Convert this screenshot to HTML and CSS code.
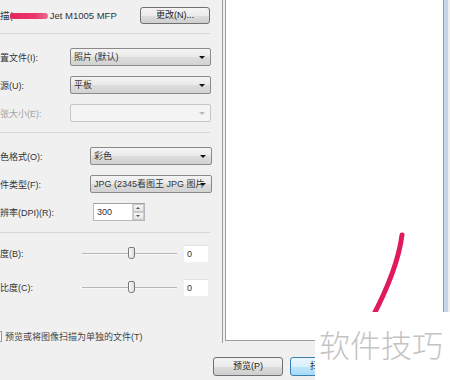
FILE: index.html
```html
<!DOCTYPE html>
<html>
<head>
    <title>新扫描</title>
    <meta content="text/html;charset=utf-8" http-equiv="Content-Type">
    <link rel="stylesheet" href="styles.css">
</head>
<body>
<div class="window">
    <div class="main">
        <div class="settings">
            <div class="scanner-row">
                <span class="scanner-name">描(<span class="redact"></span>Jet M1005 MFP</span>
                <a class="btn change-btn">更改(N)...</a>
            </div>
            <div class="sep"></div>
            <div class="group group-a">
                <span class="label">置文件(I):</span>
                <div class="select">照片 (默认)</div>
                <span class="label">源(U):</span>
                <div class="select">平板</div>
                <span class="label disabled">张大小(E):</span>
                <div class="select select-off"></div>
            </div>
            <div class="sep"></div>
            <div class="group group-b">
                <span class="label">色格式(O):</span>
                <div class="select">彩色</div>
                <span class="label">件类型(F):</span>
                <div class="select">JPG (2345看图王 JPG 图片</div>
                <span class="label">辨率(DPI)(R):</span>
                <div class="spin">
                    <span class="spin-value">300</span>
                    <span class="spin-buttons"><i class="up"></i><i class="down"></i></span>
                </div>
            </div>
            <div class="sep sep-last"></div>
            <div class="group group-c">
                <span class="label">度(B):</span>
                <div class="slider"><span class="thumb"></span></div>
                <div class="field">0</div>
                <span class="label">比度(C):</span>
                <div class="slider"><span class="thumb"></span></div>
                <div class="field">0</div>
            </div>
            <div class="check-row">
                <span class="checkbox"></span>
                <span class="check-label">预览或将图像扫描为单独的文件(T)</span>
            </div>
        </div>
        <div class="preview"></div>
        <div class="edge"></div>
    </div>
    <div class="buttons">
        <a class="btn">预览(P)</a>
        <a class="btn btn-default">扫描(S)</a>
    </div>
</div>

<svg class="stroke" width="450" height="380" viewBox="0 0 450 380">
    <path d="M402,235 C399,258 391,282 372,318" fill="none" stroke="#e01a5c" stroke-width="5" stroke-linecap="round"/>
</svg>
<div class="watermark">软件技巧</div>
</body>
</html>
```

FILE: styles.css
```css
body {
    margin: 0;
    width: 450px;
    height: 380px;
    overflow: hidden;
    background: #f0f0f0;
    font-family: "Liberation Sans", "Noto Sans CJK SC", sans-serif;
    font-size: 9px;
    color: #333;
    position: relative;
}

.main {
    display: flex;
    height: 343px;
}

.settings {
    width: 222px;
    border-right: 1px solid #9c9c9c;
    padding-top: 7px;
}

.scanner-row {
    display: flex;
    align-items: center;
    justify-content: space-between;
    width: 210px;
    height: 16px;
}

.scanner-name {
    font-size: 9.5px;
    display: flex;
    align-items: center;
}

.redact {
    display: inline-block;
    width: 38px;
    height: 6px;
    margin: 1px 2px 0 -3px;
    border-radius: 3px;
    background: linear-gradient(to right, #e8245c, #ea3a6c 70%, #ef6f93);
}

.sep {
    width: 210px;
    border-top: 1px solid #d6d6d6;
    margin: 10px 0 14px 0;
}

.sep-last {
    margin-top: 11px;
    margin-bottom: 12px;
}

.group {
    display: grid;
    row-gap: 10px;
    align-items: center;
}

.group-a {
    grid-template-columns: 70px 141px;
    grid-auto-rows: 18px;
}

.group-b {
    grid-template-columns: 90px 122px;
    grid-auto-rows: 18px;
}

.group-c {
    grid-template-columns: 82px 95px 31px;
    grid-auto-rows: 17px;
    row-gap: 17px;
}

.label {
    white-space: nowrap;
}

.disabled {
    color: #a3a3a3;
}

.select {
    position: relative;
    height: 18px;
    line-height: 17px;
    box-sizing: border-box;
    padding-left: 3px;
    border: 1px solid #8a8a8a;
    border-radius: 2px;
    background: linear-gradient(#f4f4f4, #e9e9e9 50%, #dddddd 51%, #d2d2d2);
    white-space: nowrap;
    overflow: hidden;
}

.select::after {
    content: "";
    position: absolute;
    right: 5px;
    top: 7px;
    border-left: 3px solid transparent;
    border-right: 3px solid transparent;
    border-top: 3px solid #111;
}

.select-off {
    border-color: #c6c6c6;
    background: #f4f4f4;
}

.select-off::after {
    border-top-color: #b8b8b8;
}

.spin {
    display: flex;
    width: 52px;
    height: 18px;
    margin-left: 3px;
    box-sizing: border-box;
    border: 1px solid #b3b7bf;
    border-top-color: #9ea3ab;
    background: #fff;
}

.spin-value {
    flex: 1;
    line-height: 16px;
    padding-left: 3px;
}

.spin-buttons {
    display: flex;
    flex-direction: column;
    width: 11px;
    border-left: 1px solid #d0d0d0;
}

.spin-buttons i {
    flex: 1;
    position: relative;
    background: linear-gradient(#f6f6f6, #e4e4e4);
    border: 1px solid #c8c8c8;
}

.spin-buttons i::after {
    content: "";
    position: absolute;
    left: 2px;
    top: 2px;
    border-left: 2px solid transparent;
    border-right: 2px solid transparent;
}

.spin-buttons .up::after {
    border-bottom: 2px solid #555;
}

.spin-buttons .down::after {
    border-top: 2px solid #555;
}

.slider {
    position: relative;
    height: 1px;
    background: #b8b8b8;
    border-bottom: 1px solid #f8f8f8;
}

.thumb {
    position: absolute;
    left: 46px;
    top: -6px;
    width: 5px;
    height: 10px;
    border: 1px solid #7a7a7a;
    border-radius: 2px 2px 3px 3px;
    background: linear-gradient(to right, #fbfbfb, #dcdcdc);
}

.field {
    margin-left: 7px;
    width: 24px;
    height: 17px;
    line-height: 17px;
    padding-left: 3px;
    box-sizing: border-box;
    background: #fff;
    border-top: 1px solid #e2e2e2;
}

.check-row {
    display: flex;
    align-items: center;
    margin-top: 34px;
    color: #444;
}

.checkbox {
    width: 12px;
    height: 11px;
    margin-left: -10px;
    box-sizing: border-box;
    border: 1px solid #9a9a9a;
    background: #f4f4f4;
}

.check-label {
    margin-left: 3px;
}

.preview {
    width: 217px;
    height: 340px;
    margin-left: 2px;
    margin-top: -1px;
    border: 1px solid #9e9e9e;
    background: #fff;
}

.edge {
    width: 4px;
    height: 320px;
    background: #c3d6ea;
}

.buttons {
    display: flex;
    gap: 7px;
    margin-top: 14px;
    padding-left: 213px;
}

.btn {
    display: inline-block;
    width: 70px;
    height: 19px;
    line-height: 17px;
    box-sizing: border-box;
    text-align: center;
    border: 1px solid #707070;
    border-radius: 3px;
    background: linear-gradient(#f4f4f4, #ebebeb 50%, #dddddd 51%, #cfcfcf);
    color: #222;
}

.change-btn {
    height: 17px;
    line-height: 15px;
}

.btn-default {
    border-color: #3c7fb1;
    background: linear-gradient(#eaf6fd, #d9f0fc 50%, #bee6fd 51%, #a7d9f5);
}

.stroke {
    position: absolute;
    left: 0;
    top: 0;
}

.watermark {
    position: absolute;
    left: 315px;
    top: 312px;
    width: 135px;
    height: 68px;
    box-sizing: border-box;
    padding: 14px 0 0 4px;
    background: #fff;
    font-family: "Noto Sans CJK SC", sans-serif;
    font-weight: 300;
    font-size: 31px;
    line-height: 36px;
    color: #c4c4c4;
    white-space: nowrap;
}
```
